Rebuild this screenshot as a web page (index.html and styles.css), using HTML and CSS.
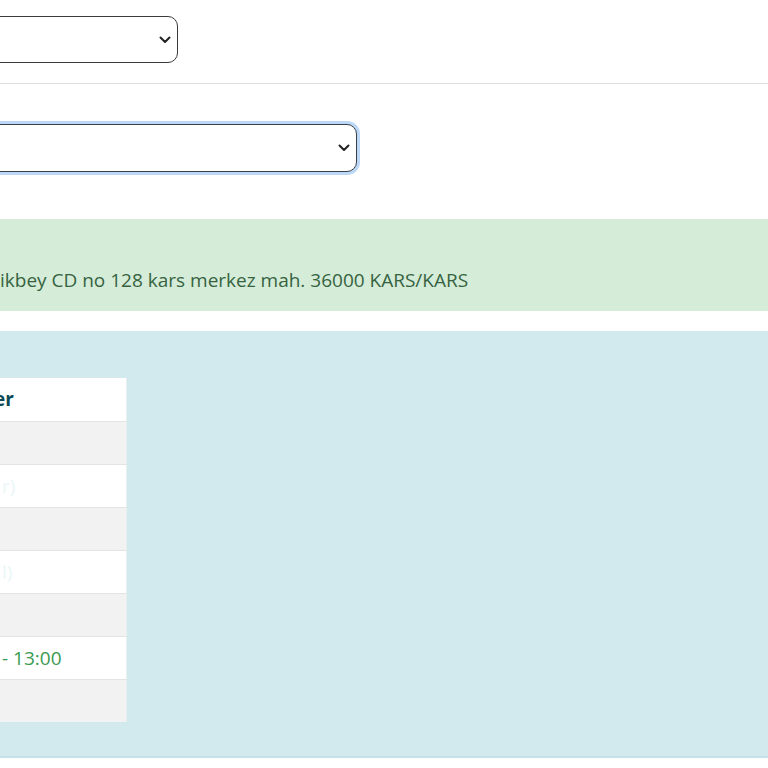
FILE: index.html
```html
<!DOCTYPE html>
<html lang="tr">
<head>
<meta charset="utf-8">
<title>Nöbetçi Eczane</title>
<link rel="stylesheet" href="styles.css">
</head>
<body>
<div class="page">
  <div class="row-top">
    <div class="select select-sm">
      <span class="value"></span>
      <svg class="chev" width="12" height="8" viewBox="0 0 12 8"><path d="M1.5 1.5 L6 6 L10.5 1.5" fill="none" stroke="#222" stroke-width="2" stroke-linecap="round" stroke-linejoin="round"/></svg>
    </div>
  </div>
  <hr class="divider">
  <div class="row-mid">
    <div class="select select-lg focused">
      <span class="value"></span>
      <svg class="chev" width="12" height="8" viewBox="0 0 12 8"><path d="M1.5 1.5 L6 6 L10.5 1.5" fill="none" stroke="#222" stroke-width="2" stroke-linecap="round" stroke-linejoin="round"/></svg>
    </div>
  </div>
  <div class="alert-success">
    <p class="addr">ikbey CD no 128 kars merkez mah. 36000 KARS/KARS</p>
  </div>
  <div class="alert-info">
    <table class="hours">
      <thead><tr><th>er</th></tr></thead>
      <tbody>
        <tr class="odd"><td></td></tr>
        <tr><td><span class="faint">r)</span></td></tr>
        <tr class="odd"><td></td></tr>
        <tr><td><span class="faint">l)</span></td></tr>
        <tr class="odd"><td></td></tr>
        <tr><td class="open">- 13:00</td></tr>
        <tr class="odd"><td></td></tr>
      </tbody>
    </table>
  </div>
</div>
</body>
</html>
```

FILE: styles.css
```css
html, body {
  margin: 0;
  padding: 0;
  background: #fff;
  font-family: "Open Sans", "Noto Sans", sans-serif;
  overflow: hidden;
}

.page {
  width: 768px;
}

.row-top {
  padding-top: 16px;
  padding-bottom: 20px;
}

.select {
  box-sizing: border-box;
  display: flex;
  align-items: center;
  justify-content: flex-end;
  border: 1px solid #3a3a3a;
  border-radius: 10px;
  background: #fff;
  padding-right: 6px;
}

.select-sm {
  margin-left: -40px;
  width: 218px;
  height: 47px;
}

.select-lg {
  margin-left: -40px;
  width: 397px;
  height: 48px;
}

.select.focused {
  border-color: #3b3f45;
  border-width: 1.5px;
  box-shadow: 0 0 0 3px #bcd8f8;
}

.chev {
  display: block;
}

.divider {
  margin: 0;
  border: 0;
  border-top: 1px solid #dedede;
}

.row-mid {
  padding-top: 40px;
  padding-bottom: 47px;
}

.alert-success {
  background: #d5ecd9;
  height: 92px;
  box-sizing: border-box;
  padding-top: 46px;
  margin-bottom: 20px;
}

.addr {
  margin: 0;
  font-size: 19px;
  line-height: 30px;
  color: #35633f;
  white-space: nowrap;
}

.alert-info {
  background: #d2e9ee;
  border-bottom: 2px solid #c5e2e8;
  height: 427px;
  box-sizing: border-box;
  padding-top: 47px;
}

.hours {
  border-collapse: collapse;
  width: 127px;
  background: #fff;
  border-right: 1px solid #e9eef0;
}

.hours th,
.hours td {
  box-sizing: border-box;
  height: 43px;
  padding: 0;
  text-align: left;
  font-size: 19px;
  white-space: nowrap;
  border-top: 1px solid #e2e4e6;
}

.hours th {
  border-top: 0;
  height: 43px;
  font-weight: 700;
  color: #0d4a55;
  text-indent: -6px;
}

.hours tr.odd td {
  background: #f2f2f2;
}

.hours td.open {
  color: #3a9a50;
  padding-left: 2px;
}

.faint {
  color: #eaf6f8;
  padding-left: 2px;
}
```
